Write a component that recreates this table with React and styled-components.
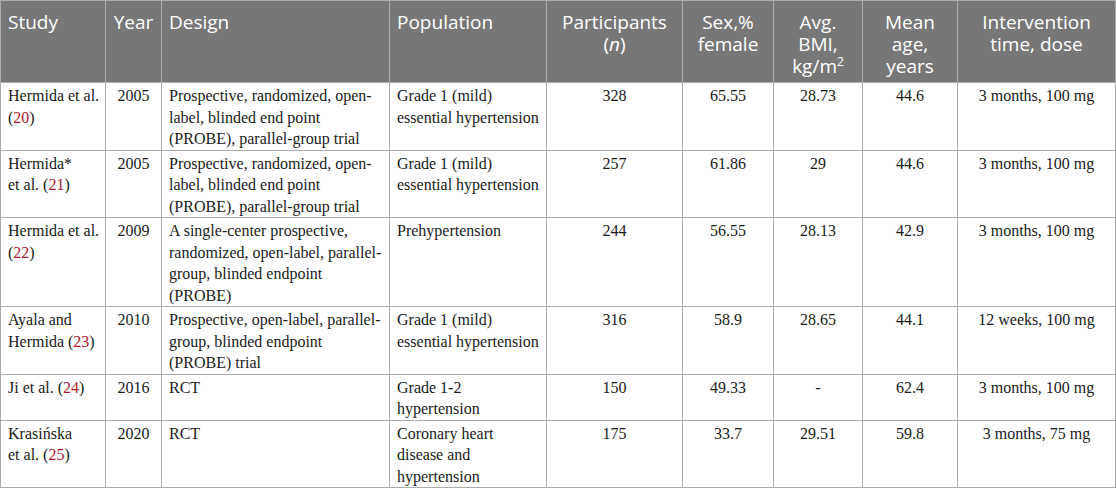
import React from "react";
import styled, { createGlobalStyle } from "styled-components";

const GlobalStyle = createGlobalStyle`
  html, body {
    margin: 0;
    padding: 0;
    background: #ffffff;
  }
`;

const columns = [
  { key: "study", label: ["Study"], width: 105, headAlign: "left", align: "left" },
  { key: "year", label: ["Year"], width: 56, headAlign: "center", align: "center" },
  { key: "design", label: ["Design"], width: 228, headAlign: "left", align: "left" },
  { key: "population", label: ["Population"], width: 157, headAlign: "left", align: "left" },
  { key: "participants", label: ["Participants", <>(<i>n</i>)</>], width: 136, headAlign: "center", align: "center" },
  { key: "sex", label: ["Sex,%", "female"], width: 91, headAlign: "center", align: "center" },
  { key: "bmi", label: ["Avg.", "BMI,", <>kg/m<sup>2</sup></>], width: 89, headAlign: "center", align: "center" },
  { key: "age", label: ["Mean", "age,", "years"], width: 95, headAlign: "center", align: "center" },
  { key: "dose", label: ["Intervention", "time, dose"], width: 158, headAlign: "center", align: "center" },
];

const rows = [
  {
    study: ["Hermida et al.", { ref: "20" }],
    year: ["2005"],
    design: ["Prospective, randomized, open-", "label, blinded end point", "(PROBE), parallel-group trial"],
    population: ["Grade 1 (mild)", "essential hypertension"],
    participants: ["328"],
    sex: ["65.55"],
    bmi: ["28.73"],
    age: ["44.6"],
    dose: ["3 months, 100 mg"],
  },
  {
    study: ["Hermida*", { pre: "et al. ", ref: "21" }],
    year: ["2005"],
    design: ["Prospective, randomized, open-", "label, blinded end point", "(PROBE), parallel-group trial"],
    population: ["Grade 1 (mild)", "essential hypertension"],
    participants: ["257"],
    sex: ["61.86"],
    bmi: ["29"],
    age: ["44.6"],
    dose: ["3 months, 100 mg"],
  },
  {
    study: ["Hermida et al.", { ref: "22" }],
    year: ["2009"],
    design: ["A single-center prospective,", "randomized, open-label, parallel-", "group, blinded endpoint", "(PROBE)"],
    population: ["Prehypertension"],
    participants: ["244"],
    sex: ["56.55"],
    bmi: ["28.13"],
    age: ["42.9"],
    dose: ["3 months, 100 mg"],
  },
  {
    study: ["Ayala and", { pre: "Hermida ", ref: "23" }],
    year: ["2010"],
    design: ["Prospective, open-label, parallel-", "group, blinded endpoint", "(PROBE) trial"],
    population: ["Grade 1 (mild)", "essential hypertension"],
    participants: ["316"],
    sex: ["58.9"],
    bmi: ["28.65"],
    age: ["44.1"],
    dose: ["12 weeks, 100 mg"],
  },
  {
    study: [{ pre: "Ji et al. ", ref: "24" }],
    year: ["2016"],
    design: ["RCT"],
    population: ["Grade 1-2", "hypertension"],
    participants: ["150"],
    sex: ["49.33"],
    bmi: ["-"],
    age: ["62.4"],
    dose: ["3 months, 100 mg"],
  },
  {
    study: ["Krasińska", { pre: "et al. ", ref: "25" }],
    year: ["2020"],
    design: ["RCT"],
    population: ["Coronary heart", "disease and", "hypertension"],
    participants: ["175"],
    sex: ["33.7"],
    bmi: ["29.51"],
    age: ["59.8"],
    dose: ["3 months, 75 mg"],
  },
];

const Table = styled.table`
  width: 1116px;
  border-collapse: collapse;
  table-layout: fixed;
`;

const HeadCell = styled.th`
  background: #777777;
  color: #ffffff;
  font-family: "Open Sans", "Noto Sans", sans-serif;
  font-weight: 400;
  font-size: 19px;
  line-height: 22px;
  text-align: ${(p) => p.$align};
  vertical-align: top;
  padding: 10px 7px 5px 7px;
  border: 1px solid #ababab;

  sup {
    font-size: 12px;
    line-height: 0;
    vertical-align: 7px;
  }
  i {
    font-style: italic;
  }
`;

const Cell = styled.td`
  font-family: "Liberation Serif", "Times New Roman", serif;
  font-size: 16px;
  line-height: 21.5px;
  color: #1a1a1a;
  text-align: ${(p) => p.$align};
  vertical-align: top;
  padding: 2px 7px 0 7px;
  border: 1px solid #ababab;
`;

const Line = styled.span`
  display: block;
  white-space: nowrap;
`;

const Ref = styled.span`
  color: #a8192e;
`;

function renderLine(line) {
  if (typeof line === "string") return line;
  return (
    <>
      {line.pre || ""}(<Ref>{line.ref}</Ref>)
    </>
  );
}

export default function App() {
  return (
    <>
      <GlobalStyle />
      <Table>
        <colgroup>
          {columns.map((c) => (
            <col key={c.key} style={{ width: c.width }} />
          ))}
        </colgroup>
        <thead>
          <tr>
            {columns.map((c) => (
              <HeadCell key={c.key} $align={c.headAlign}>
                {c.label.map((l, i) => (
                  <Line key={i}>{l}</Line>
                ))}
              </HeadCell>
            ))}
          </tr>
        </thead>
        <tbody>
          {rows.map((r, ri) => (
            <tr key={ri}>
              {columns.map((c) => (
                <Cell key={c.key} $align={c.align}>
                  {r[c.key].map((l, i) => (
                    <Line key={i}>{renderLine(l)}</Line>
                  ))}
                </Cell>
              ))}
            </tr>
          ))}
        </tbody>
      </Table>
    </>
  );
}
